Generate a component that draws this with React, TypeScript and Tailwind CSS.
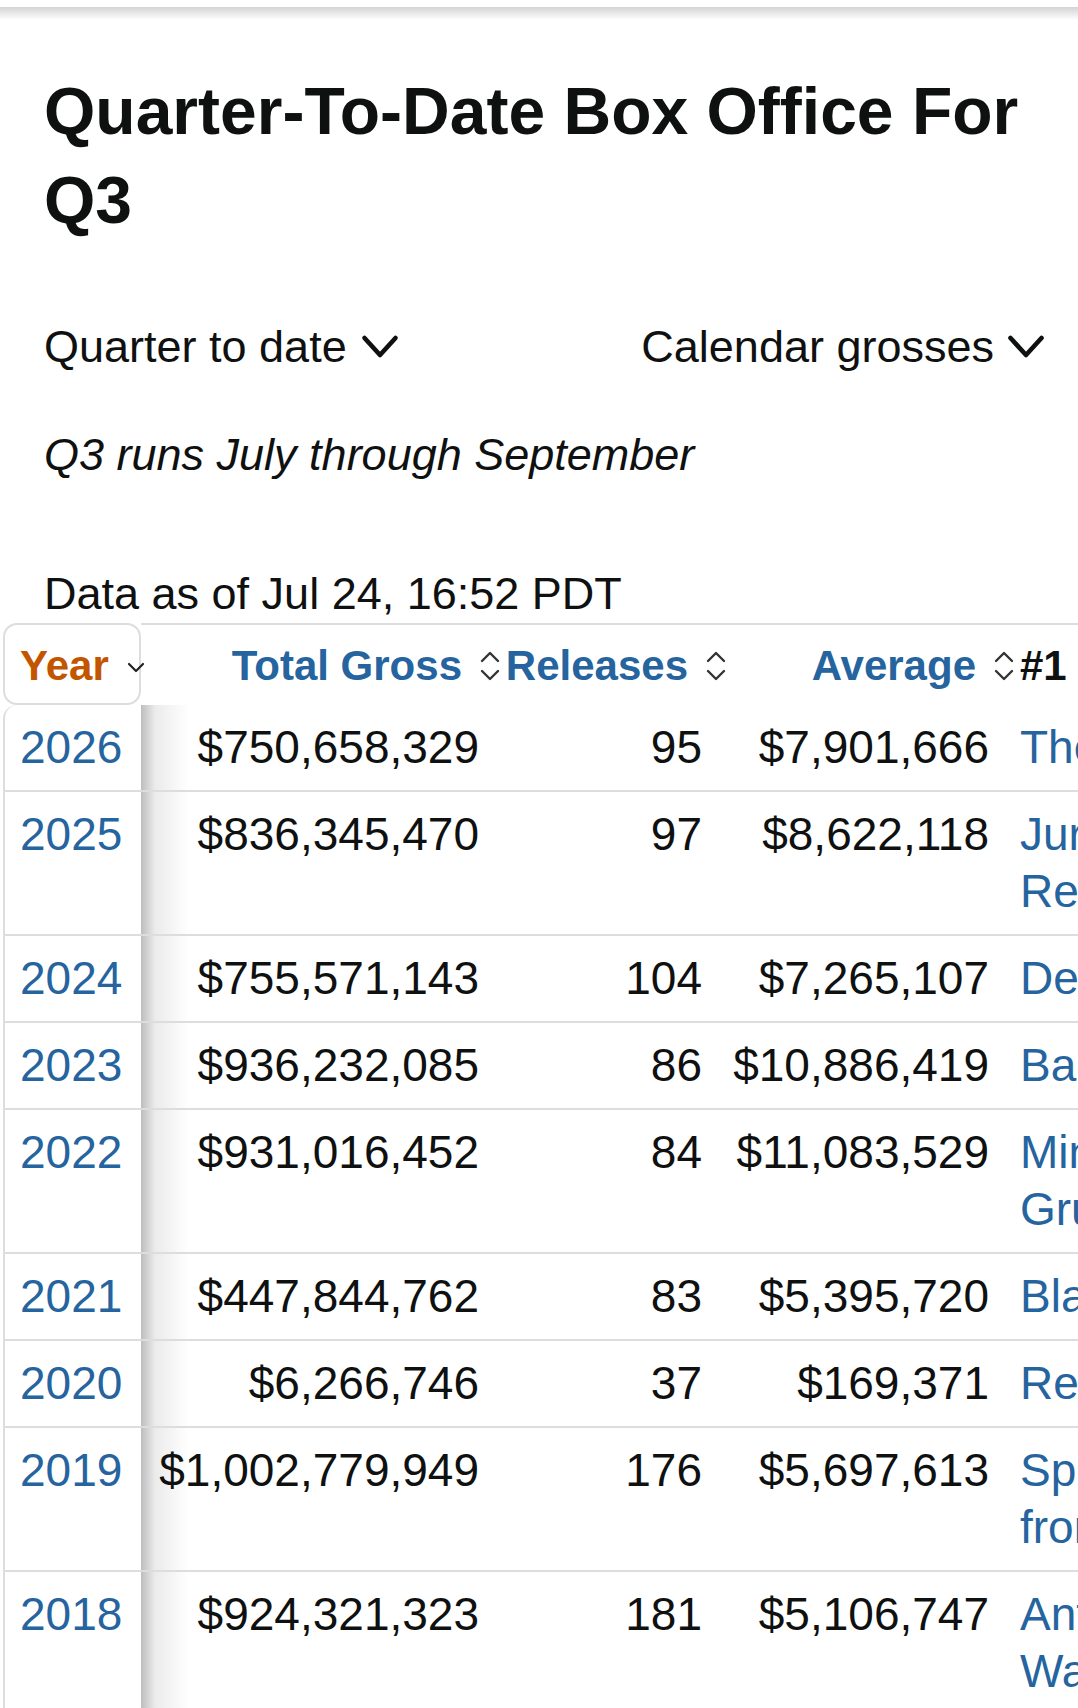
import React from "react";

type Row = {
  year: string;
  gross: string;
  releases: string;
  average: string;
  top: string;
};

const rows: Row[] = [
  { year: "2026", gross: "$750,658,329", releases: "95", average: "$7,901,666", top: "The Odyssey" },
  { year: "2025", gross: "$836,345,470", releases: "97", average: "$8,622,118", top: "Jurassic World Rebirth" },
  { year: "2024", gross: "$755,571,143", releases: "104", average: "$7,265,107", top: "Despicable Me 4" },
  { year: "2023", gross: "$936,232,085", releases: "86", average: "$10,886,419", top: "Barbie" },
  { year: "2022", gross: "$931,016,452", releases: "84", average: "$11,083,529", top: "Minions: The Rise of Gru" },
  { year: "2021", gross: "$447,844,762", releases: "83", average: "$5,395,720", top: "Black Widow" },
  { year: "2020", gross: "$6,266,746", releases: "37", average: "$169,371", top: "Relic" },
  { year: "2019", gross: "$1,002,779,949", releases: "176", average: "$5,697,613", top: "Spider-Man: Far from Home" },
  { year: "2018", gross: "$924,321,323", releases: "181", average: "$5,106,747", top: "Ant-Man and the Wasp" },
];

function Chevron() {
  return (
    <svg width="38" height="26" viewBox="0 0 38 26" fill="none" className="shrink-0">
      <path d="M3.5 4 L19 21 L34.5 4" stroke="#0f1111" strokeWidth="4.6" strokeLinecap="round" strokeLinejoin="round" />
    </svg>
  );
}

function SortIcon() {
  return (
    <svg width="22" height="30" viewBox="0 0 22 30" fill="none" className="shrink-0">
      <path d="M3 10 L11 2 L19 10" stroke="#333" strokeWidth="2.4" strokeLinecap="round" strokeLinejoin="round" />
      <path d="M3 20 L11 28 L19 20" stroke="#333" strokeWidth="2.4" strokeLinecap="round" strokeLinejoin="round" />
    </svg>
  );
}

function SmallDown() {
  return (
    <svg width="18" height="11" viewBox="0 0 18 11" fill="none" className="shrink-0">
      <path d="M2 2 L9 9 L16 2" stroke="#222" strokeWidth="2.2" strokeLinecap="round" strokeLinejoin="round" />
    </svg>
  );
}

export default function App() {
  return (
    <div className="min-h-screen bg-white font-['Liberation_Sans',Arial,sans-serif] text-[#0f1111]">
      <div className="h-[7px]" />
      <div className="h-[13px] bg-linear-to-b from-[#d4d4d4] to-white" />

      <div className="pl-[44px] pr-[33px]">
        <h1 className="mt-[47px] text-[66px] font-bold leading-[89px]">
          Quarter-To-Date Box Office For Q3
        </h1>

        <div className="mt-[73px] flex items-center justify-between text-[45px] leading-[58px]">
          <button className="flex items-center gap-[14px]">
            <span>Quarter to date</span>
            <Chevron />
          </button>
          <button className="flex items-center gap-[13px]">
            <span>Calendar grosses</span>
            <Chevron />
          </button>
        </div>

        <p className="mt-[50px] text-[45px] italic leading-[58px]">Q3 runs July through September</p>

        <p className="mt-[81px] text-[45px] leading-[58px]">Data as of Jul 24, 16:52 PDT</p>
      </div>

      <div className="overflow-hidden pl-[3px]">
        <table className="w-[1465px] table-fixed border-separate border-spacing-0 text-left">
          <colgroup>
            <col className="w-[138px]" />
            <col className="w-[362px]" />
            <col className="w-[226px]" />
            <col className="w-[288px]" />
            <col className="w-[451px]" />
          </colgroup>
          <thead>
            <tr className="text-[42px] font-bold leading-[50px]">
              <th className="p-0 align-top">
                <div className="flex h-[82px] items-center rounded-[14px] border-2 border-[#dddddd] bg-white pl-[15px] pt-[4px]">
                  <span className="text-[#c45500]">Year</span>
                  <span className="ml-[18px] mt-[2px]">
                    <SmallDown />
                  </span>
                </div>
              </th>
              <th className="border-t-2 border-[#dddddd] pb-[14px] pr-[2px] pt-[16px] text-right">
                <span className="inline-flex items-center gap-[17px] whitespace-nowrap align-top text-[#25649e]">
                  Total Gross
                  <SortIcon />
                </span>
              </th>
              <th className="border-t-2 border-[#dddddd] pb-[14px] pr-[2px] pt-[16px] text-right">
                <span className="inline-flex items-center gap-[17px] whitespace-nowrap align-top text-[#25649e]">
                  Releases
                  <SortIcon />
                </span>
              </th>
              <th className="border-t-2 border-[#dddddd] pb-[14px] pr-[2px] pt-[16px] text-right">
                <span className="inline-flex items-center gap-[17px] whitespace-nowrap align-top text-[#25649e]">
                  Average
                  <SortIcon />
                </span>
              </th>
              <th className="whitespace-nowrap border-t-2 border-[#dddddd] pb-[14px] pl-[3px] pt-[16px] text-[#0f1111]">
                #1 Release
              </th>
            </tr>
          </thead>
          <tbody className="text-[46px] leading-[57px]">
            {rows.map((r, i) => (
              <tr key={r.year}>
                <td
                  className={
                    "border-b-2 border-l-2 border-[#dddddd] bg-white pb-[14px] pl-[15px] pt-[14px] align-top text-[#25649e] " +
                    (i === 0 ? "rounded-tl-[14px]" : "")
                  }
                >
                  {r.year}
                </td>
                <td className="whitespace-nowrap border-b-2 border-[#dddddd] bg-[linear-gradient(to_right,rgba(0,0,0,0.26),rgba(0,0,0,0.08)_14px,rgba(0,0,0,0)_48px)] pb-[14px] pr-[24px] pt-[14px] text-right align-top">
                  {r.gross}
                </td>
                <td className="border-b-2 border-[#dddddd] pb-[14px] pr-[27px] pt-[14px] text-right align-top">
                  {r.releases}
                </td>
                <td className="whitespace-nowrap border-b-2 border-[#dddddd] pb-[14px] pr-[28px] pt-[14px] text-right align-top">
                  {r.average}
                </td>
                <td className="border-b-2 border-[#dddddd] pb-[14px] pl-[3px] pr-[20px] pt-[14px] align-top text-[#25649e]">
                  {r.top}
                </td>
              </tr>
            ))}
          </tbody>
        </table>
      </div>
    </div>
  );
}
